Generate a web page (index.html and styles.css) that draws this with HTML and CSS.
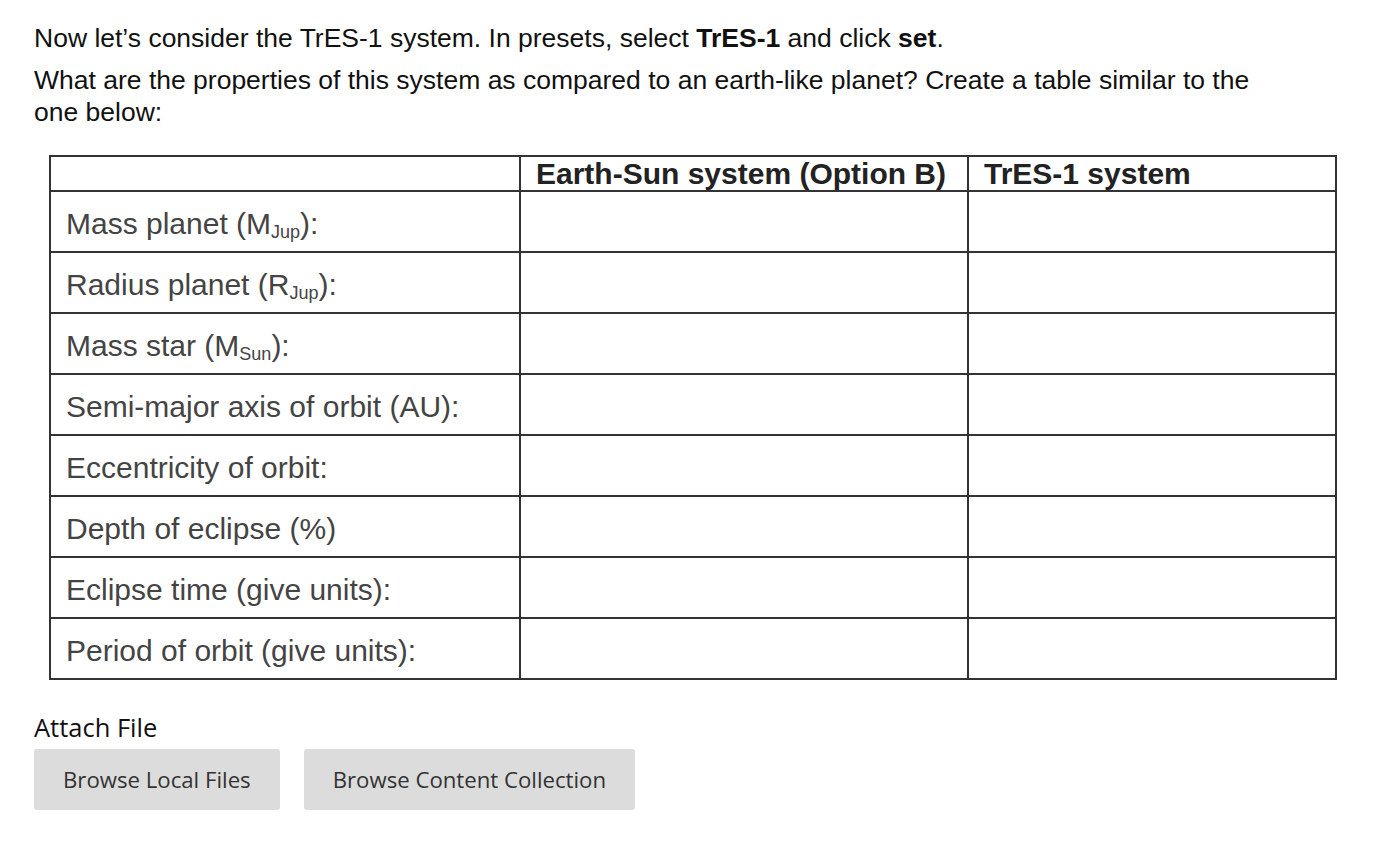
FILE: index.html
```html
<!DOCTYPE html>
<html>
<head>
<meta charset="utf-8">
<link rel="stylesheet" href="styles.css">
</head>
<body>
<div class="page">
  <p class="q q1">Now let’s consider the TrES-1 system. In presets, select <b>TrES-1</b> and click <b>set</b>.</p>
  <p class="q q2">What are the properties of this system as compared to an earth-like planet? Create a table similar to the one below:</p>
  <table class="grid">
    <colgroup><col class="c1"><col class="c2"><col class="c3"></colgroup>
    <thead>
      <tr><th></th><th>Earth-Sun system (Option B)</th><th>TrES-1 system</th></tr>
    </thead>
    <tbody>
      <tr><td>Mass planet (M<sub>Jup</sub>):</td><td></td><td></td></tr>
      <tr><td>Radius planet (R<sub>Jup</sub>):</td><td></td><td></td></tr>
      <tr><td>Mass star (M<sub>Sun</sub>):</td><td></td><td></td></tr>
      <tr><td>Semi-major axis of orbit (AU):</td><td></td><td></td></tr>
      <tr><td>Eccentricity of orbit:</td><td></td><td></td></tr>
      <tr><td>Depth of eclipse (%)</td><td></td><td></td></tr>
      <tr><td>Eclipse time (give units):</td><td></td><td></td></tr>
      <tr><td>Period of orbit (give units):</td><td></td><td></td></tr>
    </tbody>
  </table>
  <div class="attach">
    <div class="attach-label">Attach File</div>
    <div class="buttons">
      <button class="btn btn-local">Browse Local Files</button>
      <button class="btn btn-cc">Browse Content Collection</button>
    </div>
  </div>
</div>
</body>
</html>
```
FILE: styles.css
```css
html, body {
  margin: 0;
  padding: 0;
  background: #ffffff;
}
.page {
  padding: 22px 0 0 34px;
  width: 1320px;
}
.q {
  margin: 0;
  font-family: "Liberation Sans", Arial, sans-serif;
  font-size: 26.5px;
  line-height: 32px;
  color: #111;
  width: 1240px;
}
.q b { font-weight: bold; }
.q1 { margin-bottom: 10px; }
.grid {
  margin: 27px 0 0 15px;
  border-collapse: collapse;
  table-layout: fixed;
  width: 1286px;
  font-family: "Liberation Sans", Arial, sans-serif;
}
.c1 { width: 470px; }
.c2 { width: 448px; }
.c3 { width: 368px; }
.grid th, .grid td {
  border: 2px solid #333;
  padding: 0 0 0 15px;
  text-align: left;
  vertical-align: middle;
  box-sizing: border-box;
}
.grid th {
  height: 35px;
  font-size: 30px;
  line-height: 31px;
  font-weight: bold;
  color: #222;
}
.grid td {
  height: 61px;
  font-size: 30px;
  color: #444;
  padding-top: 4px;
}
.grid sub {
  font-size: 18px;
  vertical-align: -4px;
  line-height: 0;
}
.attach {
  margin-top: 30px;
  font-family: "Open Sans", sans-serif;
}
.attach-label {
  font-size: 25.5px;
  color: #111;
  line-height: 34px;
}
.buttons {
  display: flex;
  gap: 24px;
  margin-top: 5px;
}
.btn {
  font-family: "Open Sans", sans-serif;
  font-size: 22.2px;
  color: #333;
  background: #dcdcdc;
  border: none;
  border-radius: 3px;
  height: 61px;
  padding: 0 29px;
}
```
